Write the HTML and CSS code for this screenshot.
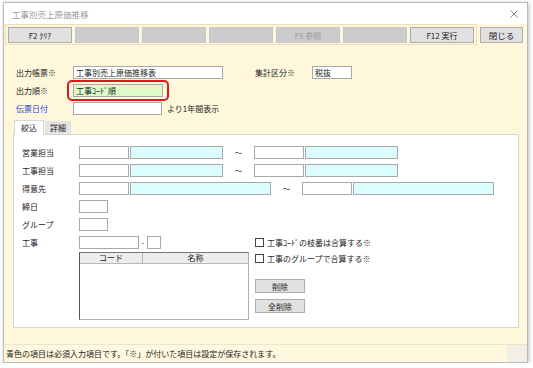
FILE: index.html
```html
<!DOCTYPE html>
<html lang="ja">

<head>
    <meta charset="UTF-8">
    <title>工事別売上原価推移</title>
    <link rel="stylesheet" href="styles.css">
</head>

<body>
    <div class="window">
        <div class="titlebar">
            <span class="title">工事別売上原価推移</span>
            <svg class="close" width="8" height="8" viewBox="0 0 8 8">
                <path d="M0.5 0.5 L7.5 7.5 M7.5 0.5 L0.5 7.5" stroke="#8a8a8a" stroke-width="1" fill="none" />
            </svg>
        </div>

        <div class="main">
            <!-- function keys -->
            <div class="top">
                <div class="fkeys">
                    <button class="fkey on">F2 ｸﾘｱ</button>
                    <button class="fkey"></button>
                    <button class="fkey"></button>
                    <button class="fkey"></button>
                    <button class="fkey off">F8 参照</button>
                    <button class="fkey"></button>
                    <button class="fkey on">F12 実行</button>
                </div>
                <button class="closebtn">閉じる</button>
            </div>

            <div class="head">
                <div class="row">
                    <span class="lbl">出力帳票※</span>
                    <div class="box w150">工事別売上原価推移表</div>
                    <span class="lbl lbl2">集計区分※</span>
                    <div class="box w40">税抜</div>
                </div>
                <div class="row">
                    <span class="lbl">出力順※</span>
                    <div class="hl">
                        <div class="box green w90">工事ｺｰﾄﾞ順</div>
                    </div>
                </div>
                <div class="row">
                    <span class="lbl blue">伝票日付</span>
                    <div class="box w89"></div>
                    <span class="note">より1年間表示</span>
                </div>
            </div>

            <div class="tabs">
                <div class="tab active">絞込</div>
                <div class="tab">詳細</div>
            </div>

            <div class="panel">
                <div class="row">
                    <span class="lbl">営業担当</span>
                    <div class="box w50"></div>
                    <div class="box cyan w93"></div>
                    <span class="tilde">～</span>
                    <div class="box w50"></div>
                    <div class="box cyan w93"></div>
                </div>
                <div class="row">
                    <span class="lbl">工事担当</span>
                    <div class="box w50"></div>
                    <div class="box cyan w93"></div>
                    <span class="tilde">～</span>
                    <div class="box w50"></div>
                    <div class="box cyan w93"></div>
                </div>
                <div class="row">
                    <span class="lbl">得意先</span>
                    <div class="box w50"></div>
                    <div class="box cyan w141"></div>
                    <span class="tilde">～</span>
                    <div class="box w50"></div>
                    <div class="box cyan w141"></div>
                </div>
                <div class="row">
                    <span class="lbl">締日</span>
                    <div class="box w29"></div>
                </div>
                <div class="row">
                    <span class="lbl">グループ</span>
                    <div class="box w29"></div>
                </div>

                <div class="lower">
                    <div class="left">
                        <div class="row kouji">
                            <span class="lbl">工事</span>
                            <div class="box w60"></div>
                            <span class="dash">-</span>
                            <div class="box w14"></div>
                        </div>
                        <div class="list">
                            <div class="list-head">
                                <span>コード</span>
                                <span>名称</span>
                            </div>
                        </div>
                    </div>
                    <div class="right">
                        <div class="check"><span class="cb"></span>工事ｺｰﾄﾞの枝番は合算する※</div>
                        <div class="check"><span class="cb"></span>工事のグループで合算する※</div>
                        <button class="sbtn first">削除</button>
                        <button class="sbtn">全削除</button>
                    </div>
                </div>
            </div>
        </div>

        <div class="status">
            <span>青色の項目は必須入力項目です。「※」が付いた項目は設定が保存されます。</span>
            <span class="grip"></span>
        </div>
    </div>
</body>

</html>
```

FILE: styles.css
```css
/* base */
* {
    box-sizing: border-box;
}

body {
    margin: 0;
    background: #fff;
    font-family: "Noto Sans CJK JP", "DejaVu Sans", sans-serif;
    font-size: 8px;
    color: #222;
}

.window {
    margin: 2px 0 0 3px;
    width: 525px;
    height: 361px;
    border: 1px solid #b9b9b9;
    box-shadow: 1px 1px 4px rgba(0, 0, 0, .25);
    background: #fff7dc;
    display: flex;
    flex-direction: column;
}

.titlebar {
    height: 21px;
    background: #fff;
    display: flex;
    align-items: center;
    justify-content: space-between;
    padding: 0 9px 0 8px;
    color: #999;
    font-size: 8.5px;
}

.main {
    flex: 1;
}

/* function key bar */
.top {
    display: flex;
    padding-left: 1px;
}

.fkeys {
    display: flex;
    gap: 3px;
    padding: 2px 2px 1px;
    border: 1px solid #ecdfba;
}

.fkey,
.closebtn,
.sbtn {
    height: 16px;
    padding: 0;
    font-family: inherit;
    font-size: 8px;
    color: #222;
    border: 1px solid #c9c9c9;
    background: #cccccc;
    border-radius: 0;
}

.fkey {
    width: 64px;
}

.fkey.on {
    background: #e1e1e1;
    border-color: #adadad;
}

.fkey.off {
    color: #9a9a9a;
}

.closebtn {
    width: 43px;
    margin: 3px 0 0 3px;
    background: #e1e1e1;
    border-color: #adadad;
    font-size: 8.5px;
}

/* header form */
.head {
    padding: 21px 0 0 12px;
}

.row {
    display: flex;
    align-items: center;
    height: 13px;
    margin-bottom: 5px;
}

.lbl {
    width: 57px;
    flex-shrink: 0;
}

.lbl2 {
    margin-left: 32px;
}

.blue {
    color: #2443d6;
}

.box {
    height: 13px;
    border: 1px solid #a9a9a9;
    background: #fff;
    line-height: 11px;
    padding-left: 2px;
    flex-shrink: 0;
}

.green {
    background: #dcfbc8;
}

.cyan {
    background: #dcfdfd;
    margin-left: 1px;
}

.hl {
    margin: -4px 0 -4px -6px;
    padding: 2px 4px;
    border: 2px solid #e3161b;
    border-radius: 5px;
}

.note {
    margin-left: 5px;
}

.w14 { width: 14px; }
.w29 { width: 29px; }
.w40 { width: 40px; }
.w50 { width: 50px; }
.w60 { width: 60px; }
.w89 { width: 89px; }
.w90 { width: 90px; }
.w93 { width: 93px; }
.w141 { width: 141px; }
.w150 { width: 150px; }

/* tabs + panel */
.tabs {
    display: flex;
    margin: 3px 0 0 10px;
}

.tab {
    height: 13px;
    margin-top: 1px;
    padding: 0 5px;
    line-height: 13px;
    background: #e4e4e4;
}

.tab.active {
    position: relative;
    z-index: 1;
    height: 15px;
    margin: 0 1px -1px 0;
    padding: 0 6px;
    line-height: 14px;
    background: #fff;
    border: 1px solid #d6d6d6;
    border-bottom: none;
}

.panel {
    margin-left: 9px;
    width: 506px;
    height: 194px;
    border: 1px solid #d6d6d6;
    background: #fff;
    padding: 11px 0 0 8px;
}

.tilde {
    width: 31px;
    text-align: center;
    color: #444;
}

.dash {
    width: 8px;
    text-align: center;
}

.lower {
    display: flex;
}

.left {
    width: 227px;
}

.kouji {
    margin-bottom: 3px;
}

.list {
    margin-left: 57px;
    width: 170px;
    height: 68px;
    border: 1px solid #b0b0b0;
    border-left-color: #555;
    border-top-color: #777;
    background: #fff;
}

.list-head {
    display: grid;
    grid-template-columns: 63px 1fr;
    height: 11px;
    line-height: 10px;
    background: #ececec;
    border-bottom: 1px solid #b8b8b8;
}

.list-head span {
    text-align: center;
}

.list-head span:first-child {
    border-right: 1px solid #b8b8b8;
}

.right {
    margin-left: 6px;
}

.check {
    display: flex;
    align-items: center;
    height: 13px;
    margin-bottom: 3px;
}

.cb {
    width: 9px;
    height: 9px;
    border: 1px solid #444;
    background: #fff;
    margin-right: 3px;
}

.sbtn {
    display: block;
    width: 50px;
    height: 14px;
    margin-bottom: 6px;
    background: #e1e1e1;
    border-color: #adadad;
}

.sbtn.first {
    margin-top: 14px;
}

/* status bar */
.status {
    height: 18px;
    display: flex;
    align-items: center;
    justify-content: space-between;
    padding-left: 2px;
    border-top: 1px solid #ece4cb;
    background: #fff8de;
}

.grip {
    width: 20px;
    height: 100%;
    background: #f1efe8;
}
```
